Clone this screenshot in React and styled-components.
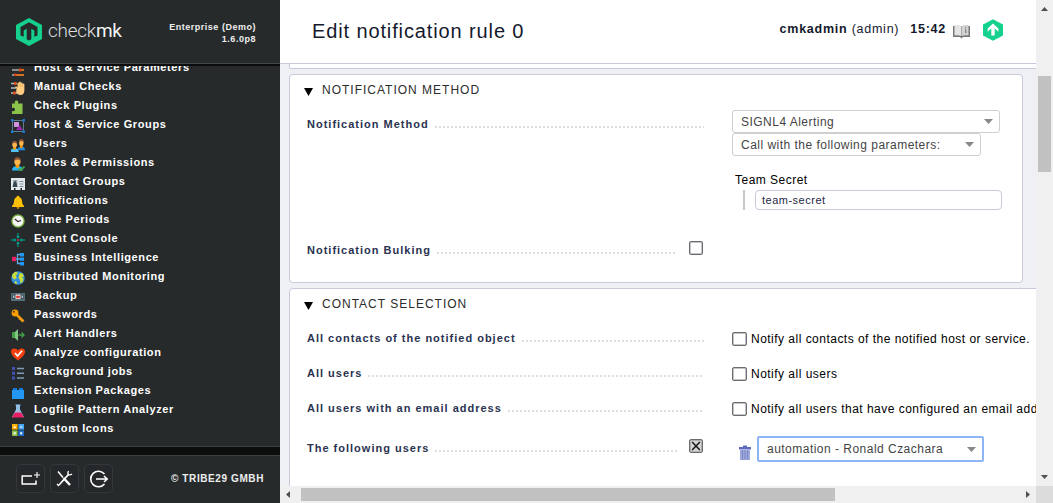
import React from "react";
import styled, { createGlobalStyle } from "styled-components";

const Global = createGlobalStyle`
  html, body { margin: 0; padding: 0; }
  *, *::before, *::after { box-sizing: border-box; }
  body { font-family: "Liberation Sans", Arial, sans-serif; overflow: hidden; }
  svg { display: block; }
`;

const Page = styled.div`
  display: flex;
  width: 1053px;
  height: 503px;
  overflow: hidden;
  background: #eff0f3;
`;

/* ---------- sidebar ---------- */

const Sidebar = styled.aside`
  width: 280px;
  flex: none;
  display: flex;
  flex-direction: column;
  background: #262a2b;
  color: #fff;
`;

const SideHead = styled.header`
  height: 66px;
  flex: none;
  display: flex;
  align-items: flex-start;
  padding: 18px 24px 0 16px;
  border-bottom: 2px solid #0b0c0c;
  box-shadow: inset 0 -1px 0 #434648;
`;

const Brand = styled.div`
  margin: 0 0 0 6px;
  font: 300 19px/26px Roboto, sans-serif;
  letter-spacing: -0.25px;
  color: #dcdedf;
  b { font-weight: 400; color: #f4f4f4; }
`;

const Version = styled.div`
  margin: 3px 0 0 auto;
  font-size: 9px;
  line-height: 12px;
  font-weight: 700;
  letter-spacing: 0.52px;
  text-align: right;
  color: #eee;
`;

const Menu = styled.nav`
  height: 381px;
  flex: none;
  overflow: hidden;
  border-bottom: 1px solid #3a3d3e;
`;

const MenuList = styled.ul`
  list-style: none;
  margin: -9px 0 0;
  padding: 0 0 0 11px;
`;

const MenuItem = styled.li`
  display: flex;
  align-items: center;
  height: 19px;
  font-size: 11px;
  font-weight: 700;
  letter-spacing: 0.6px;
  white-space: nowrap;
  svg { margin: 5px 9px 0 0; flex: none; }
`;

const SideGap = styled.div`
  height: 9px;
  flex: none;
  background: #0c0d0d;
  border-bottom: 1px solid #3c4043;
`;

const SideFoot = styled.footer`
  flex: 1;
  display: flex;
  align-items: flex-start;
  gap: 5px;
  padding: 8px 16px 0;
`;

const FootButton = styled.button`
  width: 29px;
  height: 29px;
  padding: 0;
  display: flex;
  align-items: center;
  justify-content: center;
  border: 1px solid #34383a;
  border-radius: 5px;
  background: #24282a;
`;

const Copyright = styled.span`
  margin: 9px 0 0 auto;
  font-size: 10px;
  line-height: 12px;
  font-weight: 700;
  letter-spacing: 0.6px;
  color: #eee;
`;

/* ---------- main ---------- */

const Main = styled.main`
  width: 773px;
  flex: none;
  display: flex;
  flex-direction: column;
`;

const Upper = styled.div`
  display: flex;
  height: 486px;
`;

const Content = styled.div`
  width: 756px;
  overflow: hidden;
`;

const TopBar = styled.header`
  height: 64px;
  display: flex;
  align-items: flex-start;
  padding: 0 33px 0 32px;
  background: #fff;
  border-bottom: 1px solid #c9cade;
`;

const Title = styled.h1`
  margin: 19px auto 0 0;
  font-size: 20px;
  line-height: 24px;
  font-weight: 400;
  letter-spacing: 0.88px;
  color: #14192d;
`;

const UserInfo = styled.div`
  margin-top: 21px;
  font-size: 12.5px;
  line-height: 17px;
  letter-spacing: 0.75px;
  color: #14192d;
  white-space: nowrap;
`;

const Clock = styled(UserInfo)`
  margin-left: 11px;
`;

const BookSlot = styled.div`
  margin: 24px 13px 0 7px;
`;

const LogoSlot = styled.div`
  margin-top: 19px;
`;

const Panel = styled.section`
  margin: ${(p) => p.$top || 0}px 0 0 9px;
  width: ${(p) => p.$width}px;
  height: ${(p) => p.$height}px;
  background: #fff;
  border: 1px solid #c9cade;
  border-radius: 4px;
  ${(p) => p.$tail && "border-top: 0; border-top-left-radius: 0;"}
`;

const PanelTitle = styled.h2`
  display: flex;
  align-items: center;
  height: 30px;
  margin: 0;
  padding-left: 14px;
  gap: 9px;
  font-size: 12px;
  font-weight: 400;
  letter-spacing: 1px;
  color: #2c2c2c;
  svg { margin-top: 3px; }
`;

const Row = styled.div`
  display: flex;
  align-items: flex-start;
  height: ${(p) => p.$height}px;
  margin-top: ${(p) => p.$gap || 0}px;
  padding-left: 17px;
`;

const Legend = styled.div`
  width: 397px;
  flex: none;
  display: flex;
  margin: ${(p) => p.$top || 0}px 28px 0 0;
  line-height: 14px;
  font-size: 11px;
  font-weight: 700;
  letter-spacing: 1px;
  color: #2a3350;
  white-space: nowrap;
`;

const Dots = styled.span`
  flex: 1;
  height: 2px;
  margin: 9px ${(p) => p.$right ?? 0}px 0 6px;
  background: repeating-linear-gradient(90deg, #dedede 0 2px, transparent 2px 4px);
`;

const Value = styled.div`
  font-size: 12px;
  letter-spacing: 0.48px;
  color: #000;
  white-space: nowrap;
`;

const Box = styled.span`
  flex: none;
  display: flex;
  align-items: center;
  justify-content: center;
  width: ${(p) => p.$w || 15}px;
  height: 14px;
  border: 1px solid #6c6c72;
  border-radius: 2px;
  background: ${(p) => (p.$on ? "#d4d4d4" : "#fff")};
  box-shadow: inset 0 0 0 0.5px #8a8a90;
  margin-top: ${(p) => p.$top || 0}px;
`;

const Check = styled.label`
  display: flex;
  gap: 4px;
  line-height: 16px;
`;

const Select = styled.div`
  display: flex;
  align-items: center;
  justify-content: space-between;
  width: ${(p) => p.$w}px;
  height: ${(p) => p.$h || 23}px;
  padding: 0 6px 0 8px;
  border: ${(p) => (p.$focus ? "2px solid #8db4f4" : "1px solid #cfcfcf")};
  border-radius: ${(p) => (p.$focus ? 2 : 3)}px;
  background: #fff;
  color: #444;
`;

const FieldName = styled.div`
  margin: 17px 0 0 3px;
  line-height: 14px;
`;

const Nested = styled.div`
  margin: 3px 0 0 11px;
  padding-left: 10px;
  border-left: 2px solid #c8c8c8;
  height: 20px;
`;

const Input = styled.div`
  width: 247px;
  height: 20px;
  padding-left: 6px;
  border: 1px solid #c9cade;
  border-radius: 4px;
  font-size: 11px;
  line-height: 18px;
  letter-spacing: 0.5px;
  color: #1e2846;
`;

const UserPick = styled.div`
  display: flex;
  align-items: flex-start;
  padding-left: 7px;
  svg:first-child { margin: 9px 6px 0 0; }
  ${Select} svg { margin: 0; }
`;

/* ---------- scroll bars ---------- */

const VBar = styled.div`
  width: 17px;
  display: flex;
  flex-direction: column;
  align-items: center;
  background: #f0f0f0;
  padding: 7px 0;
`;
const VThumb = styled.div`
  width: 13px;
  height: 96px;
  margin: 65px 0 auto;
  background: #c1c1c1;
`;
const HBar = styled.div`
  height: 17px;
  display: flex;
  align-items: center;
  padding-left: 6px;
  background: #f0f0f0;
`;
const HThumb = styled.div`
  width: 534px;
  height: 13px;
  margin: 0 auto 0 11px;
  background: #c1c1c1;
`;
const Corner = styled.div`
  width: 17px;
  height: 17px;
  margin-left: 6px;
  background: #dcdcdc;
`;

/* ---------- drawings ---------- */

const Logo = ({ w, h, solid }) => (
  <svg width={w} height={h} viewBox="0 0 26 28">
    <path d="M13 0 26 7v14l-13 7L0 21V7z" fill="#15d18d" />
    {solid ? (
      <path d="M13 5.500 20 12v4.200l-4.800-4V21h-4.400v-8.800L6 16.200V12z" fill="#fff" />
    ) : (
      <path
        d="M13 4.200 21.500 9v8.500l-3.200 1.300v-6.300l-3-1.700v10.400L13 22.500l-2.300-1.300V10.800l-3 1.700v6.300l-3.200-1.300V9z"
        fill="#262a2b"
      />
    )}
  </svg>
);

const Caret = () => (
  <svg width="9" height="5" viewBox="0 0 9 5"><path d="M0 0h9L4.500 5z" fill="#888" /></svg>
);

const Fold = () => (
  <svg width="9" height="8" viewBox="0 0 9 8"><path d="M0 0h9L4.500 8z" fill="#000" /></svg>
);

const Tri = ({ d, w, h }) => (
  <svg width={w} height={h} viewBox={`0 0 ${w} ${h}`}><path d={d} fill="#505050" /></svg>
);

const Person = ({ shirt }) => (
  <g>
    <path d="M0 14q0-4 4.500-4T9 14z" fill={shirt} />
    <path d="M3 8h3v3l-1.500 1L3 11z" fill="#ff9800" />
    <ellipse cx="4.500" cy="6" rx="2.600" ry="3.400" fill="#ffb74d" />
    <path d="M1.700 6Q1.500 2 4.500 2t2.800 4Q6.500 4 4.500 4.200T1.700 6z" fill="#8a5236" />
  </g>
);

const icons = {
  params: (
    <>
      <path d="M1 2.500h12M1 8h12M1 13h12" stroke="#a9b0b3" strokeWidth="1.600" />
      <path d="M8 8h5M4 13h9" stroke="#ef6c00" strokeWidth="1.600" />
      <path d="M8 6.500h2.500v3H8zM3 11.500h2.500v2.500H3z" fill="#d84315" />
    </>
  ),
  manual: (
    <>
      <path d="M0 2.500h6M0 7h5M0 12h6" stroke="#b0bec5" strokeWidth="1.500" />
      <path d="M3 1h2.500v3H3zM2 10.500h2.500v3H2z" fill="#e64a19" />
      <path d="M5.500 7.500 4 6l1-.8 1.500 1.300V2q.9-1 1.600 0V1q.9-1 1.700 0v.8q.9-.8 1.700 0V3q1-.9 1.900 0V9q0 5-4 5-3 0-4.200-3z" fill="#ffcc80" />
      <path d="M8.100 2v4M9.800 2v4M11.500 3v3" stroke="#e0a860" strokeWidth=".5" />
    </>
  ),
  plugin: <path d="M1 3.500h3Q3 .5 5.500.5T7 3.500h4.500V14H1v-3q3 .8 3-1.500T1 8z" fill="#8bc34a" />,
  groups: (
    <>
      <path d="M1.500 1.500h11v11h-11z" fill="none" stroke="#607d8b" />
      <path d="M3 3h5v5H3z" fill="#ce93d8" /><path d="M5 11h7L8.500 6z" fill="#9c27b0" />
      <path d="M0 0h2.500v2.500H0zM11.500 0H14v2.500h-2.500zM0 11.500h2.500V14H0zM11.500 11.500H14V14h-2.500z" fill="#1976d2" />
    </>
  ),
  users: (
    <>
      <g transform="translate(6.500 -1) scale(.85 .95)"><Person shirt="#1e88e5" /></g>
      <g transform="translate(-.5 1) scale(.92)"><Person shirt="#4fc3f7" /></g>
    </>
  ),
  roles: (
    <>
      <g transform="translate(1 -2) scale(1.200 1.100)"><Person shirt="#29b6f6" /></g>
      <path d="m7.500 11.500 2 2 4-4" stroke="#43a047" strokeWidth="1.800" fill="none" />
    </>
  ),
  contacts: (
    <>
      <path d="M0 2h14v12H0z" fill="#e3e8ee" />
      <path d="M2 4h4.500v6H2z" fill="#9aa7b2" />
      <path d="M4.200 4.500 5.500 7l1 4h-5l1-4z" fill="#37474f" />
      <path d="M8.500 5.500h4M8.500 8h4M8.500 10.500h4" stroke="#78909c" />
      <path d="M3 12h1.500v2H3zM9.500 12H11v2H9.500z" fill="#262a2b" />
    </>
  ),
  bell: (
    <>
      <path d="M7 .8q1.300 0 1.300 1.200Q11 3 11 6.500q0 3 2 4.500v1H1v-1q2-1.500 2-4.500Q3 3 5.700 2 5.700.8 7 .8z" fill="#ffc107" />
      <path d="M5.500 12.300h3q-.3 1.500-1.500 1.500t-1.500-1.500z" fill="#ff9800" />
    </>
  ),
  clock: (
    <>
      <circle cx="7" cy="7" r="6.100" fill="#f5f5f5" stroke="#7cb342" strokeWidth="1.300" />
      <path d="M3.800 5 7 7.500 10 6.500" stroke="#333" fill="none" strokeWidth="1.200" />
    </>
  ),
  event: (
    <>
      <path d="M7 0v5M7 9v5M0 7h5M9 7h5" stroke="#00897b" strokeWidth="1.400" />
      <path d="M5 3h4L7 5.800zM5 11h4L7 8.200zM3 5v4l2.800-2zM11 5v4L8.200 7z" fill="#009688" />
      <circle cx="7" cy="7" r="1.100" fill="#d32f2f" />
    </>
  ),
  bi: (
    <>
      <path d="M3 7h7M10 2.500H6.500v9H10" stroke="#64a7e0" strokeWidth="1.300" fill="none" />
      <path d="M1 4.800h4v4.400H1z" fill="#e91e63" />
      <path d="M9 1h4v3.500H9zM9 5.500h4v3.300H9zM9 10h4v3.500H9z" fill="#2196f3" />
    </>
  ),
  globe: (
    <>
      <circle cx="7" cy="7" r="6.800" fill="#2f8fdc" />
      <path d="M1 4 4 .8l3 .8-1 2-1.500 1L6 7l-2.500 1.500L1.500 7zM8.500 2l3 .5 1.500 3-2 .5 1.500 2-1 3-2 1.500-.5-3.500L7.500 7zM4 10l2 1-.5 2.500-2-1.500z" fill="#cddc39" />
    </>
  ),
  backup: (
    <>
      <path d="M0 3h14v8H0z" fill="#546e7a" />
      <path d="M1.500 4.500h11v4.500h-11z" fill="#37474f" />
      <path d="M2 5.500h1.500v2.500H2zM10.500 5.500H12v2.500h-1.500z" fill="#b0bec5" />
      <path d="M4.500 4.500h5v4.500h-5z" fill="#eceff1" />
      <path d="M5.200 5.700h3.600v2.500H5.200z" fill="#e53935" />
    </>
  ),
  key: (
    <>
      <path d="m5 5 7.500 7.500" stroke="#f59b12" strokeWidth="2.600" />
      <path d="M8 10.500 9.500 9M10 12l1.500-1.500" stroke="#f59b12" strokeWidth="1.300" />
      <circle cx="4" cy="4" r="3.400" fill="#ffa000" /><circle cx="2.800" cy="2.800" r="1" fill="#4e342e" />
    </>
  ),
  alert: (
    <>
      <path d="M1 4h3v6H1z" fill="#43a047" /><path d="M4 4 7 1v12L4 10z" fill="#81c784" />
      <path d="M7.500 7h5M10.500 4.500 13 7l-2.500 2.500" stroke="#43a047" strokeWidth="1.400" fill="none" />
    </>
  ),
  heart: (
    <>
      <path d="M7 13.500Q0 8.500 0 4.800 0 1.500 3.500 1.500 6 1.500 7 3.500q1-2 3.500-2Q14 1.500 14 4.800q0 3.700-7 8.700z" fill="#f4400f" />
      <path d="m4 6 2.500 3L11 3.800" stroke="#fff" strokeWidth="1.700" fill="none" />
    </>
  ),
  jobs: (
    <>
      <path d="M1 1h3v3H1zM1 5.700h3v3H1zM1 10.500h3v3H1z" fill="#3f51b5" />
      <path d="M6 2.500h7M6 7.200h7M6 12h7" stroke="#7e9cb8" strokeWidth="1.500" />
    </>
  ),
  brick: (
    <>
      <path d="M1 5h12v9H1z" fill="#2196f3" />
      <path d="M2 3h4v2H2zM8 3h4v2H8z" fill="#1976d2" />
    </>
  ),
  flask: (
    <>
      <path d="M4.500 1h5M5.700 1v4.500L2 12.500h10L8.300 5.500V1" stroke="#90caf9" strokeWidth="1.200" fill="#9fb8d0" />
      <path d="M3.800 8.500h6.400l2.800 5H1z" fill="#e91e63" />
    </>
  ),
  custom: (
    <>
      <path d="M1 1h5.600v5.600H1z" fill="#ffb300" /><path d="M7.400 1H13v5.600H7.400z" fill="#42a5f5" />
      <path d="M1 7.400h5.600V13H1z" fill="#8bc34a" /><path d="M7.400 7.400H13V13H7.400z" fill="#1e70c8" />
      <path d="m2.500 5 1.300-2.500L5 5zM9 4.500h2.500v-1H9zM2.700 9.300h2v2h-2zM9.200 9.300h2v2h-2z" fill="#fff" />
    </>
  ),
};

const Icon = ({ name }) => (
  <svg width="14" height="14" viewBox="0 0 14 14">{icons[name]}</svg>
);

const menu = [
  ["params", "Host & Service Parameters"],
  ["manual", "Manual Checks"],
  ["plugin", "Check Plugins"],
  ["groups", "Host & Service Groups"],
  ["users", "Users"],
  ["roles", "Roles & Permissions"],
  ["contacts", "Contact Groups"],
  ["bell", "Notifications"],
  ["clock", "Time Periods"],
  ["event", "Event Console"],
  ["bi", "Business Intelligence"],
  ["globe", "Distributed Monitoring"],
  ["backup", "Backup"],
  ["key", "Passwords"],
  ["alert", "Alert Handlers"],
  ["heart", "Analyze configuration"],
  ["jobs", "Background jobs"],
  ["brick", "Extension Packages"],
  ["flask", "Logfile Pattern Analyzer"],
  ["custom", "Custom Icons"],
];

export default function App() {
  return (
    <Page>
      <Global />
      <Sidebar>
        <SideHead>
          <Logo w={26} h={28} />
          <Brand>check<b>mk</b></Brand>
          <Version>Enterprise (Demo)<br />1.6.0p8</Version>
        </SideHead>
        <Menu>
          <MenuList>
            {menu.map(([icon, text]) => (
              <MenuItem key={icon}><Icon name={icon} />{text}</MenuItem>
            ))}
          </MenuList>
        </Menu>
        <SideGap />
        <SideFoot>
          <FootButton>
            <svg width="19" height="16" viewBox="0 0 19 16" fill="none" stroke="#fff">
              <path d="M11 5H1.200v8H15V9.500" strokeWidth="1.500" />
              <path d="M16 1v6M13 4h6" strokeWidth="1.100" />
            </svg>
          </FootButton>
          <FootButton>
            <svg width="17" height="17" viewBox="0 0 17 17" fill="none" stroke="#fff">
              <path d="m2 1.500 5 6" strokeWidth="1.500" />
              <path d="m7.500 8 6.500 7" strokeWidth="2.400" />
              <path d="M3 15 12.500 4.500" strokeWidth="1.800" />
              <path d="M12.500 1q-1 2-.3 3.500Q14 5.500 16 4M1 14l2 2" strokeWidth="1.400" />
            </svg>
          </FootButton>
          <FootButton>
            <svg width="20" height="18" viewBox="0 0 20 18" fill="none" stroke="#fff" strokeWidth="1.600">
              <path d="M15.500 4A7.800 7.800 0 1 0 15.500 14" />
              <path d="M7 9h11M15 6l3.200 3-3.200 3" />
            </svg>
          </FootButton>
          <Copyright>© TRIBE29 GMBH</Copyright>
        </SideFoot>
      </Sidebar>

      <Main>
        <Upper>
          <Content>
            <TopBar>
              <Title>Edit notification rule 0</Title>
              <UserInfo><b>cmkadmin</b> (admin)</UserInfo>
              <Clock><b>15:42</b></Clock>
              <BookSlot>
                <svg width="17" height="15" viewBox="0 0 17 15">
                  <path d="M0 2h17v11h-7l-1.500 1.500L7 13H0z" fill="#777" />
                  <path d="M1.500 1Q5.500.5 8.500 2v10Q5.500 11 1.500 11.500z" fill="#e4e4e4" />
                  <path d="M15.500 1Q11.500.5 8.500 2v10q3-1 7-.5z" fill="#d2d2d2" />
                  <path d="M8.500 2v10" stroke="#aaa" />
                  <path d="M12 3h1.300v1.300H12zM12 5.200h1.300V9H12z" fill="#888" />
                </svg>
              </BookSlot>
              <LogoSlot><Logo w={20} h={22} solid /></LogoSlot>
            </TopBar>

            <Panel $tail $width={900} $height={5} />

            <Panel $top={5} $width={734} $height={209}>
              <PanelTitle><Fold />NOTIFICATION METHOD</PanelTitle>
              <Row $height={130} $gap={5}>
                <Legend $top={7}>Notification Method<Dots /></Legend>
                <Value>
                  <Select $w={268}>SIGNL4 Alerting<Caret /></Select>
                  <Select $w={249}>Call with the following parameters:<Caret /></Select>
                  <FieldName>Team Secret</FieldName>
                  <Nested><Input>team-secret</Input></Nested>
                </Value>
              </Row>
              <Row $height={40}>
                <Legend $top={3}>
                  Notification Bulking<Dots $right={12} />
                  <Box $w={14} $top={-2} style={{ marginRight: 1 }} />
                </Legend>
              </Row>
            </Panel>

            <Panel $top={5} $width={900} $height={300}>
              <PanelTitle><Fold />CONTACT SELECTION</PanelTitle>
              <Row $height={35} $gap={12}>
                <Legend>All contacts of the notified object<Dots /></Legend>
                <Value><Check><Box $top={1} />Notify all contacts of the notified host or service.</Check></Value>
              </Row>
              <Row $height={35}>
                <Legend>All users<Dots /></Legend>
                <Value><Check><Box $top={1} />Notify all users</Check></Value>
              </Row>
              <Row $height={35}>
                <Legend>All users with an email address<Dots /></Legend>
                <Value><Check><Box $top={1} />Notify all users that have configured an email address</Check></Value>
              </Row>
              <Row $height={40}>
                <Legend $top={5}>
                  The following users<Dots $right={12} />
                  <Box $on $w={14} $top={-2} style={{ marginRight: 1 }}>
                    <svg width="10" height="10" viewBox="0 0 9 9"><path d="m1 1 7 7M8 1 1 8" stroke="#111" strokeWidth="1.300" /></svg>
                  </Box>
                </Legend>
                <Value>
                  <UserPick>
                    <svg width="12" height="15" viewBox="0 0 12 15">
                      <path d="M1 5h10v10H1z" fill="#9fa8da" />
                      <path d="M3.500 5.500v9M6 5.500v9M8.500 5.500v9" stroke="#7986cb" />
                      <path d="M0 2h4V.5h4V2h4v2.500H0z" fill="#5c6bc0" />
                    </svg>
                    <Select $w={227} $h={26} $focus>automation - Ronald Czachara<Caret /></Select>
                  </UserPick>
                </Value>
              </Row>
            </Panel>
          </Content>
          <VBar>
            <Tri w={7} h={4} d="M3.500 0 7 4H0z" />
            <VThumb />
            <Tri w={7} h={4} d="M0 0h7L3.500 4z" />
          </VBar>
        </Upper>
        <HBar>
          <Tri w={4} h={7} d="M4 0v7L0 3.500z" />
          <HThumb />
          <Tri w={4} h={7} d="M0 0v7l4-3.500z" />
          <Corner />
        </HBar>
      </Main>
    </Page>
  );
}
